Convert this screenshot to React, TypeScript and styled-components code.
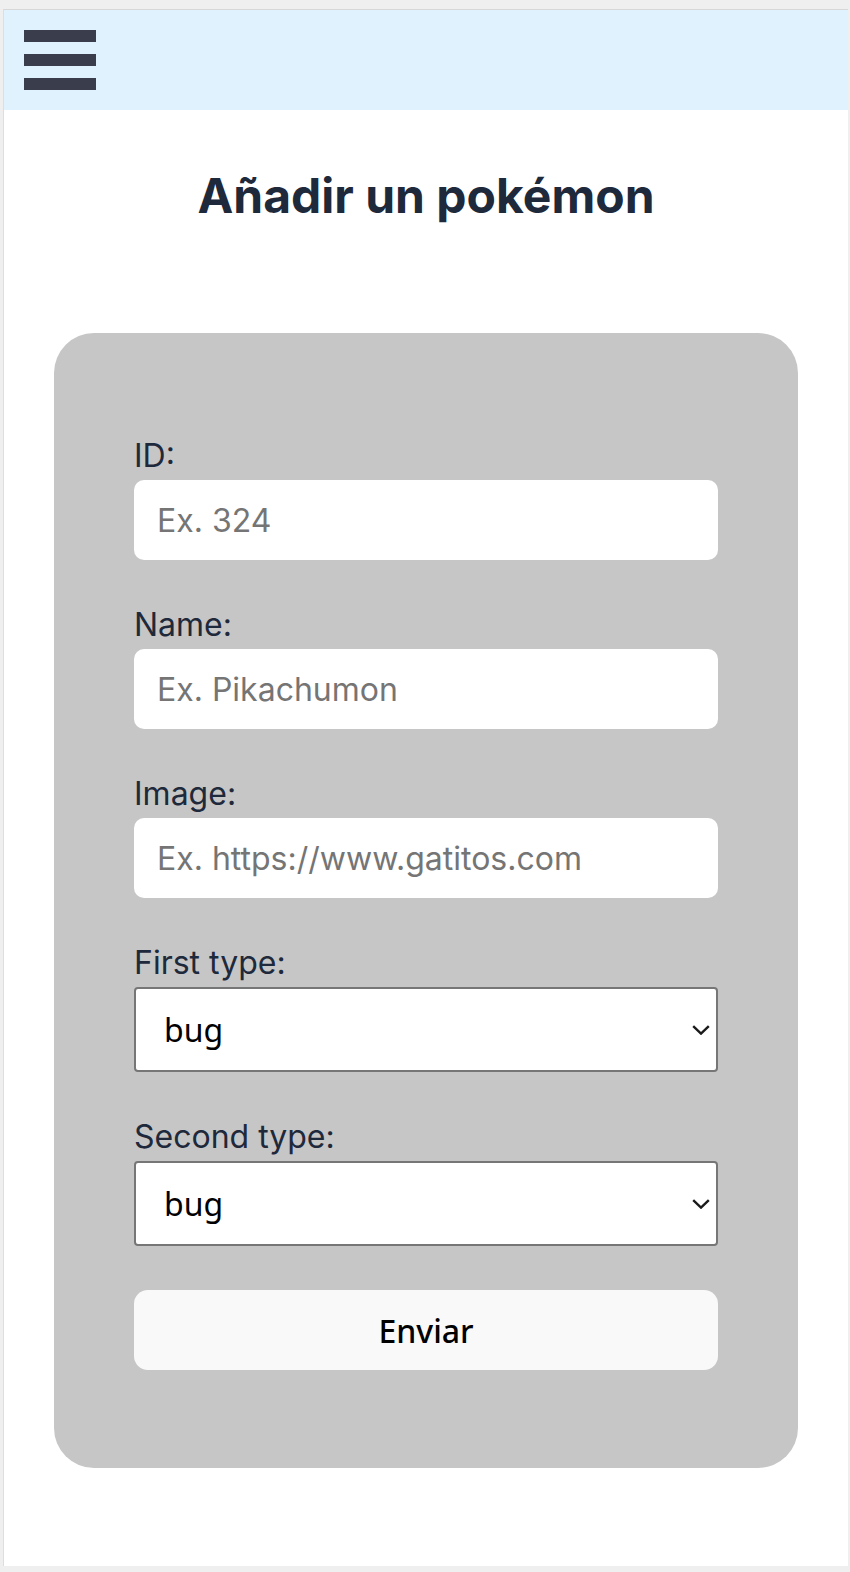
import React from 'react'
import styled, { createGlobalStyle } from 'styled-components'

const GlobalStyle = createGlobalStyle`
  html, body {
    margin: 0;
    padding: 0;
    background-color: #efefef;
  }
  * {
    box-sizing: border-box;
  }
`

const Frame = styled.div`
  margin: 9px 2px 0 3px;
  height: 1557px;
  background-color: #ffffff;
  border-top: 1px solid #d7d7d7;
  border-left: 1px solid #dedede;
  display: flex;
  flex-direction: column;
  font-family: Inter, 'Noto Sans', sans-serif;
`

const Navbar = styled.header`
  height: 100px;
  padding: 20px 0 0 20px;
  background-color: #e0f2fe;
`

const MenuButton = styled.button`
  display: flex;
  flex-direction: column;
  gap: 12px;
  padding: 0;
  border: none;
  background: none;
  cursor: pointer;
`

const MenuBar = styled.span`
  display: block;
  width: 72px;
  height: 12px;
  background-color: #3a3d4b;
`

const Title = styled.h1`
  margin: 56px 0 0;
  text-align: center;
  font-size: 48px;
  line-height: 60px;
  font-weight: 700;
  color: #1e293b;
`

const Card = styled.form`
  margin: 107px 50px 0 50px;
  padding: 104px 80px 98px;
  background-color: #c6c6c6;
  border-radius: 40px;
  display: flex;
  flex-direction: column;
  gap: 46px;
`

const Field = styled.div`
  display: flex;
  flex-direction: column;
  gap: 5px;
`

const Label = styled.label`
  font-size: 32px;
  line-height: 38px;
  color: #1e293b;
`

const Input = styled.input`
  height: 80px;
  width: 100%;
  padding: 0 23px;
  border: none;
  border-radius: 10px;
  background-color: #ffffff;
  font-family: Inter, sans-serif;
  font-size: 32px;
  color: #1e293b;
  outline: none;

  &::placeholder {
    color: #757575;
  }
`

const SelectWrap = styled.div`
  position: relative;
`

const Select = styled.select`
  appearance: none;
  width: 100%;
  height: 85px;
  padding: 0 0 0 28px;
  border: 2px solid #767676;
  border-radius: 4px;
  background-color: #ffffff;
  font-family: 'Noto Sans', sans-serif;
  font-size: 32px;
  color: #000000;
  outline: none;
`

const Chevron = styled.svg`
  position: absolute;
  right: 8px;
  top: 50%;
  transform: translateY(-50%);
  pointer-events: none;
`

const SubmitButton = styled.button`
  margin-top: -2px;
  height: 80px;
  border: none;
  border-radius: 14px;
  background-color: #f9f9f9;
  font-family: 'Noto Sans', sans-serif;
  font-size: 32px;
  font-weight: 500;
  color: #000000;
  cursor: pointer;
`

const types = ['bug', 'dark', 'dragon', 'electric', 'fairy', 'fighting', 'fire', 'flying', 'ghost', 'grass', 'ground', 'ice', 'normal', 'poison', 'psychic', 'rock', 'steel', 'water']

const TypeSelect = ({ id }: { id: string }) => (
  <SelectWrap>
    <Select id={id} defaultValue="bug">
      {types.map((t) => (
        <option key={t} value={t}>{t}</option>
      ))}
    </Select>
    <Chevron width="18" height="10" viewBox="0 0 18 10">
      <path d="M1.2 1.2 L9 8.6 L16.8 1.2" fill="none" stroke="#1a1a1a" strokeWidth="2.4" />
    </Chevron>
  </SelectWrap>
)

const App: React.FunctionComponent = () => {
  return (
    <>
      <GlobalStyle />
      <Frame>
        <Navbar>
          <MenuButton type="button" aria-label="menu">
            <MenuBar />
            <MenuBar />
            <MenuBar />
          </MenuButton>
        </Navbar>

        <Title>Añadir un pokémon</Title>

        <Card onSubmit={(e) => e.preventDefault()}>
          <Field>
            <Label htmlFor="id">ID:</Label>
            <Input id="id" placeholder="Ex. 324" />
          </Field>
          <Field>
            <Label htmlFor="name">Name:</Label>
            <Input id="name" placeholder="Ex. Pikachumon" />
          </Field>
          <Field>
            <Label htmlFor="image">Image:</Label>
            <Input id="image" placeholder="Ex. https://www.gatitos.com" />
          </Field>
          <Field>
            <Label htmlFor="type1">First type:</Label>
            <TypeSelect id="type1" />
          </Field>
          <Field>
            <Label htmlFor="type2">Second type:</Label>
            <TypeSelect id="type2" />
          </Field>
          <SubmitButton type="submit">Enviar</SubmitButton>
        </Card>
      </Frame>
    </>
  )
}

export default App
